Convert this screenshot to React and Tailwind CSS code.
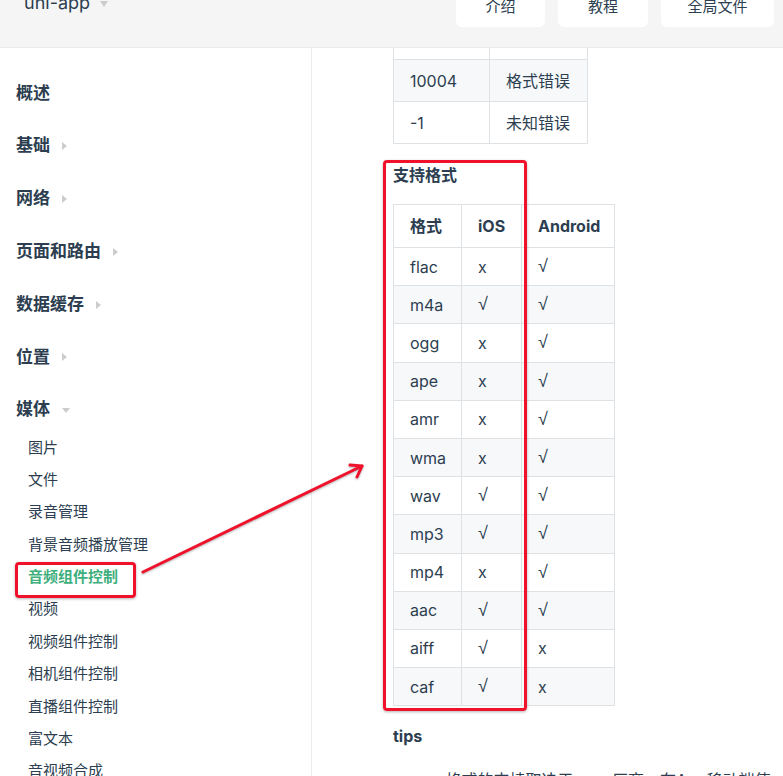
import React from "react";

const headings = [
  { t: "概述", arrow: null },
  { t: "基础", arrow: "right" },
  { t: "网络", arrow: "right" },
  { t: "页面和路由", arrow: "right" },
  { t: "数据缓存", arrow: "right" },
  { t: "位置", arrow: "right" },
  { t: "媒体", arrow: "down" },
];

const subs = [
  "图片",
  "文件",
  "录音管理",
  "背景音频播放管理",
  "音频组件控制",
  "视频",
  "视频组件控制",
  "相机组件控制",
  "直播组件控制",
  "富文本",
  "音视频合成",
];

const formats = [
  ["flac", "x", "√"],
  ["m4a", "√", "√"],
  ["ogg", "x", "√"],
  ["ape", "x", "√"],
  ["amr", "x", "√"],
  ["wma", "x", "√"],
  ["wav", "√", "√"],
  ["mp3", "√", "√"],
  ["mp4", "x", "√"],
  ["aac", "√", "√"],
  ["aiff", "√", "x"],
  ["caf", "√", "x"],
];

function Arrow({ dir }) {
  if (dir === "right")
    return (
      <span className="inline-block ml-3 w-0 h-0 border-l-[5px] border-l-[#cccccc] border-y-[4px] border-y-transparent" />
    );
  if (dir === "down")
    return (
      <span className="inline-block ml-3 w-0 h-0 border-t-[5px] border-t-[#cccccc] border-x-[4px] border-x-transparent" />
    );
  return null;
}

function Cell({ v }) {
  return (
    <div className="border-r border-b border-[#dfe2e5] flex items-center pl-4">
      {v === "√" ? <span className="font-['Liberation_Sans',sans-serif] text-[18px]">√</span> : v}
    </div>
  );
}

export default function App() {
  return (
    <div className="relative w-full h-[776px] overflow-hidden bg-white text-[#2c3e50] font-['Inter','Noto_Sans_CJK_SC',sans-serif]">
      {/* Header */}
      <div className="h-[48px] bg-[#f5f5f5] border-b border-[#eaecef] flex items-start justify-between">
        <div className="ml-6 -mt-[9px] flex items-center text-[18px] leading-[24px] text-[#2c3e50]">
          <span>uni-app</span>
          <span className="inline-block ml-[10px] mt-[2px] w-0 h-0 border-t-[6px] border-t-[#cccccc] border-x-[4px] border-x-transparent" />
        </div>
        <div className="flex gap-[13px] mr-[9px] -mt-[13px]">
          <div className="w-[89px] h-[40px] bg-white rounded-md flex items-center justify-center text-[15px]">介绍</div>
          <div className="w-[90px] h-[40px] bg-white rounded-md flex items-center justify-center text-[15px]">教程</div>
          <div className="w-[113px] h-[40px] bg-white rounded-md flex items-center justify-center text-[15px]">全局文件</div>
        </div>
      </div>

      <div className="flex">
        {/* Sidebar */}
        <div className="w-[312px] shrink-0 border-r border-[#eaecef] h-[740px] pt-[19px]">
          {headings.map((h) => (
            <div key={h.t} className="h-[52.8px] flex items-center pl-4 text-[17px] font-bold">
              <span>{h.t}</span>
              <Arrow dir={h.arrow} />
            </div>
          ))}
          <div className="-mt-[5px]">
            {subs.map((s) => (
              <div
                key={s}
                className={
                  "h-[32.4px] flex items-center pl-[28px] text-[15px] " +
                  (s === "音频组件控制" ? "text-[#3eaf7c] font-semibold" : "text-[#2c3e50]")
                }
              >
                {s}
              </div>
            ))}
          </div>
        </div>

        {/* Main */}
        <div className="flex-1 pl-[81px] text-[16px]">
          {/* Table 1 */}
          <div className="w-[195px] border-l border-[#dfe2e5]">
            <div className="grid grid-cols-[96px_98px] h-[12px]">
              <div className="border-r border-b border-[#dfe2e5]" />
              <div className="border-r border-b border-[#dfe2e5]" />
            </div>
            <div className="grid grid-cols-[96px_98px] h-[42px] bg-[#f6f8fa]">
              <Cell v="10004" />
              <Cell v="格式错误" />
            </div>
            <div className="grid grid-cols-[96px_98px] h-[42px]">
              <Cell v="-1" />
              <Cell v="未知错误" />
            </div>
          </div>

          <div className="mt-[19px] leading-[24px] font-bold">支持格式</div>

          {/* Table 2 */}
          <div className="mt-[17px] w-[222px] border-l border-t border-[#dfe2e5]">
            <div className="grid grid-cols-[68px_60px_93px] h-[43px] font-bold">
              <Cell v="格式" />
              <Cell v="iOS" />
              <Cell v="Android" />
            </div>
            {formats.map((r, i) => (
              <div
                key={r[0]}
                className={
                  "grid grid-cols-[68px_60px_93px] h-[38.2px] " + (i % 2 === 1 ? "bg-[#f6f8fa]" : "bg-white")
                }
              >
                {r.map((c, j) => (
                  <Cell key={j} v={c} />
                ))}
              </div>
            ))}
          </div>

          <div className="mt-[18px] leading-[24px] font-bold">tips</div>

          <ul className="mt-[20px] list-disc pl-5 leading-[24px]">
            <li>ape 格式的支持取决于 rom 厂商，在App移动端使用</li>
          </ul>
        </div>
      </div>

      {/* Annotations */}
      <div className="absolute left-[15px] top-[562px] w-[121px] h-[36px] border-[3px] border-[#f0112b] rounded-[4px] shadow-[0_1px_3px_rgba(0,0,0,0.3)]" />
      <div className="absolute left-[383px] top-[160px] w-[144px] h-[551px] border-[3px] border-[#f0112b] rounded-[4px] shadow-[0_1px_3px_rgba(0,0,0,0.3)]" />
      <svg className="absolute inset-0 w-full h-full pointer-events-none" viewBox="0 0 783 776">
        <g stroke="#f0112b" strokeWidth="3" strokeLinecap="round" strokeLinejoin="round" fill="none" style={{ filter: "drop-shadow(0 1px 1px rgba(0,0,0,0.3))" }}>
          <line x1="143" y1="572" x2="362" y2="466" />
          <polyline points="350,465 362,466 357,477" />
        </g>
      </svg>
    </div>
  );
}
